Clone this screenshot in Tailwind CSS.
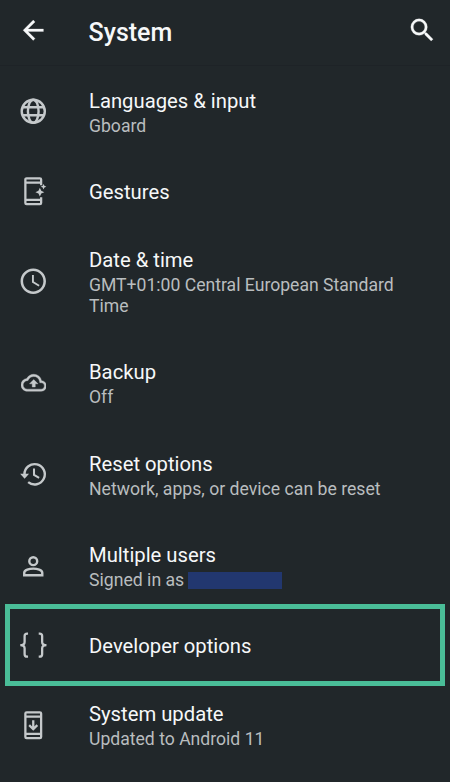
<!DOCTYPE html>
<html lang="en">
<head>
<meta charset="utf-8">
<title>System</title>
<script src="https://cdn.jsdelivr.net/npm/@tailwindcss/browser@4"></script>
</head>
<body class="w-[450px] h-[782px] overflow-hidden bg-[#21272a] font-[Roboto,sans-serif] text-[#f6f8f9]">
<header class="h-[66px] flex items-center pl-[18px] pr-[13px] pb-[4px] border-b border-[#1e2327]">
  <svg class="size-[30.5px] shrink-0" viewBox="0 0 24 24" fill="currentColor" stroke="currentColor" stroke-width=".2"><path d="M20 11H7.83l5.59-5.59L12 4l-8 8 8 8 1.41-1.41L7.83 13H20v-2z"/></svg>
  <h1 class="ml-[40px] pt-[5px] flex-1 text-[25px] leading-[30px] font-medium">System</h1>
  <svg class="size-[30.5px] shrink-0" viewBox="0 0 24 24" fill="currentColor" stroke="currentColor" stroke-width=".2"><path d="M15.5 14h-.79l-.28-.27A6.471 6.471 0 0 0 16 9.5 6.5 6.5 0 1 0 9.5 16c1.61 0 3.09-.59 4.23-1.57l.27.28v.79l5 4.99L20.49 19l-4.99-5zm-6 0C7.01 14 5 11.99 5 9.5S7.01 5 9.5 5 14 7.01 14 9.5 11.99 14 9.5 14z"/></svg>
</header>
<main>
  <section class="h-[91px] flex items-center">
    <div class="w-[89px] pl-[18px] shrink-0 text-[#c5c9cb]"><svg class="size-[30.5px]" viewBox="0 0 24 24" fill="none" stroke="currentColor" stroke-width="1.9"><circle cx="12" cy="12" r="9.1"/><ellipse cx="12" cy="12" rx="4.2" ry="9.1"/><path d="M3.5 8.9h17M3.5 15.1h17"/></svg></div>
    <div class="pt-[3px]"><h2 class="text-[20.25px] leading-[25px]">Languages &amp; input</h2><p class="pt-[2px] text-[17.6px] leading-[21px] text-[#b9bdbf]">Gboard</p></div>
  </section>
  <section class="h-[68px] flex items-center">
    <div class="w-[89px] pl-[18px] shrink-0 text-[#c5c9cb]"><svg class="size-[30.5px]" viewBox="0 0 24 24" fill="none" stroke="currentColor" stroke-width="1.8"><path d="M18.2 7.2V2.8a1 1 0 0 0-1-1H6.8a1 1 0 0 0-1 1v18.4a1 1 0 0 0 1 1h10.4a1 1 0 0 0 1-1V16.8M5.8 5.2h12.4M5.8 18.8h12.4"/><path fill="currentColor" stroke="none" d="m17.2 9.2 1.1 2.4 2.4 1.1-2.4 1.1-1.1 2.4-1.1-2.4-2.4-1.1 2.4-1.1zM20.1 6.2l.7 1.5 1.5.7-1.5.7-.7 1.5-.7-1.5-1.5-.7 1.5-.7z"/></svg></div>
    <h2 class="pt-[2px] text-[20.25px] leading-[25px]">Gestures</h2>
  </section>
  <section class="h-[112px] flex items-center">
    <div class="w-[89px] pl-[18px] shrink-0 text-[#c5c9cb]"><svg class="size-[30.5px]" viewBox="0 0 24 24" fill="currentColor"><path d="M11.99 2C6.47 2 2 6.48 2 12s4.47 10 9.99 10C17.52 22 22 17.52 22 12S17.52 2 11.99 2zM12 20c-4.42 0-8-3.58-8-8s3.58-8 8-8 8 3.58 8 8-3.58 8-8 8zm.5-13H11v6l5.25 3.15.75-1.23-4.5-2.67z"/></svg></div>
    <div class="pt-[3px]"><h2 class="text-[20.25px] leading-[25px]">Date &amp; time</h2><p class="pt-[2px] text-[17.6px] leading-[21px] text-[#b9bdbf]">GMT+01:00 Central European Standard<br>Time</p></div>
  </section>
  <section class="h-[92px] flex items-center">
    <div class="w-[89px] pl-[20.5px] shrink-0 text-[#c5c9cb]"><svg class="size-[25.5px]" viewBox="0 0 24 24" fill="currentColor" stroke="currentColor" stroke-width=".35"><path d="M19.35 10.04A7.49 7.49 0 0 0 12 4C9.11 4 6.6 5.64 5.35 8.04A5.994 5.994 0 0 0 0 14c0 3.31 2.69 6 6 6h13c2.76 0 5-2.24 5-5 0-2.64-2.05-4.78-4.65-4.96zM19 18H6c-2.21 0-4-1.79-4-4 0-2.05 1.53-3.76 3.56-3.97l1.07-.11.5-.95A5.469 5.469 0 0 1 12 6c2.62 0 4.88 1.86 5.39 4.43l.3 1.5 1.53.11A2.98 2.98 0 0 1 22 15c0 1.65-1.35 3-3 3zM8 13h2.55v3h2.9v-3H16l-4-4z"/></svg></div>
    <div class="pt-[1px]"><h2 class="text-[20.25px] leading-[25px]">Backup</h2><p class="pt-[2px] text-[17.6px] leading-[21px] text-[#b9bdbf]">Off</p></div>
  </section>
  <section class="h-[91px] flex items-center">
    <div class="w-[89px] pl-[18px] shrink-0 text-[#c5c9cb]"><svg class="size-[30.5px]" viewBox="0 0 24 24" fill="none" stroke="currentColor" stroke-width="1.9"><path d="M5.1 12a8 8 0 1 1 2.9 6.2"/><path d="M12.6 7.5v5l4 2.4" stroke-width="1.6"/><path d="M1.7 11.6h7L5.2 15.6z" fill="currentColor" stroke="none"/></svg></div>
    <div class="pt-[3px]"><h2 class="text-[20.25px] leading-[25px]">Reset options</h2><p class="pt-[2px] text-[17.65px] leading-[21px] text-[#b9bdbf]">Network, apps, or device can be reset</p></div>
  </section>
  <section class="h-[92px] flex items-center">
    <div class="w-[89px] pl-[18px] shrink-0 text-[#c5c9cb]"><svg class="size-[30.5px]" viewBox="0 0 24 24" fill="none" stroke="currentColor" stroke-width="1.9"><circle cx="12" cy="8" r="3.1"/><path d="M4.9 19.1v-2c0-2 4-3.2 7.1-3.2s7.1 1.2 7.1 3.2v2z"/></svg></div>
    <div class="pt-[1px]"><h2 class="text-[20.25px] leading-[25px]">Multiple users</h2><p class="pt-[2px] text-[17.65px] leading-[21px] text-[#b9bdbf] flex items-center">Signed in as<span class="ml-[4px] mt-[1px] w-[94px] h-[17px] bg-[#22376f]"></span></p></div>
  </section>
  <section class="h-[82px] -mt-[8px] mx-[5px] border-[5px] border-[#4abd98] flex items-center">
    <div class="w-[79px] pl-[8px] shrink-0 text-[#c5c9cb]"><svg class="size-[30.5px]" viewBox="0 0 24 24" fill="none" stroke="currentColor" stroke-width="1.8"><path d="M7.9 2.8h-.7a2 2 0 0 0-2 2v4.6c0 1.5-.9 2.5-3.4 2.5 2.5 0 3.4 1 3.4 2.5V19a2 2 0 0 0 2 2h.7M16.3 2.8h.7a2 2 0 0 1 2 2v4.6c0 1.5.9 2.5 3.4 2.5-2.5 0-3.4 1-3.4 2.5V19a2 2 0 0 1-2 2h-.7"/></svg></div>
    <h2 class="pt-[3px] text-[20.25px] leading-[25px]">Developer options</h2>
  </section>
  <section class="h-[90px] -mt-[6px] flex items-center">
    <div class="w-[89px] pl-[18px] shrink-0 text-[#c5c9cb]"><svg class="size-[30.5px]" viewBox="0 0 24 24" fill="none" stroke="currentColor" stroke-width="1.8"><rect x="5.8" y="1.8" width="12.4" height="20.4" rx="1"/><path d="M5.8 5.2h12.4M5.8 18.8h12.4M12 8v6.5M8.8 11.9l3.2 3.2 3.2-3.2"/></svg></div>
    <div class="pt-[1px]"><h2 class="text-[20.25px] leading-[25px]">System update</h2><p class="pt-[2px] text-[17.6px] leading-[21px] text-[#b9bdbf]">Updated to Android 11</p></div>
  </section>
</main>
</body>
</html>
